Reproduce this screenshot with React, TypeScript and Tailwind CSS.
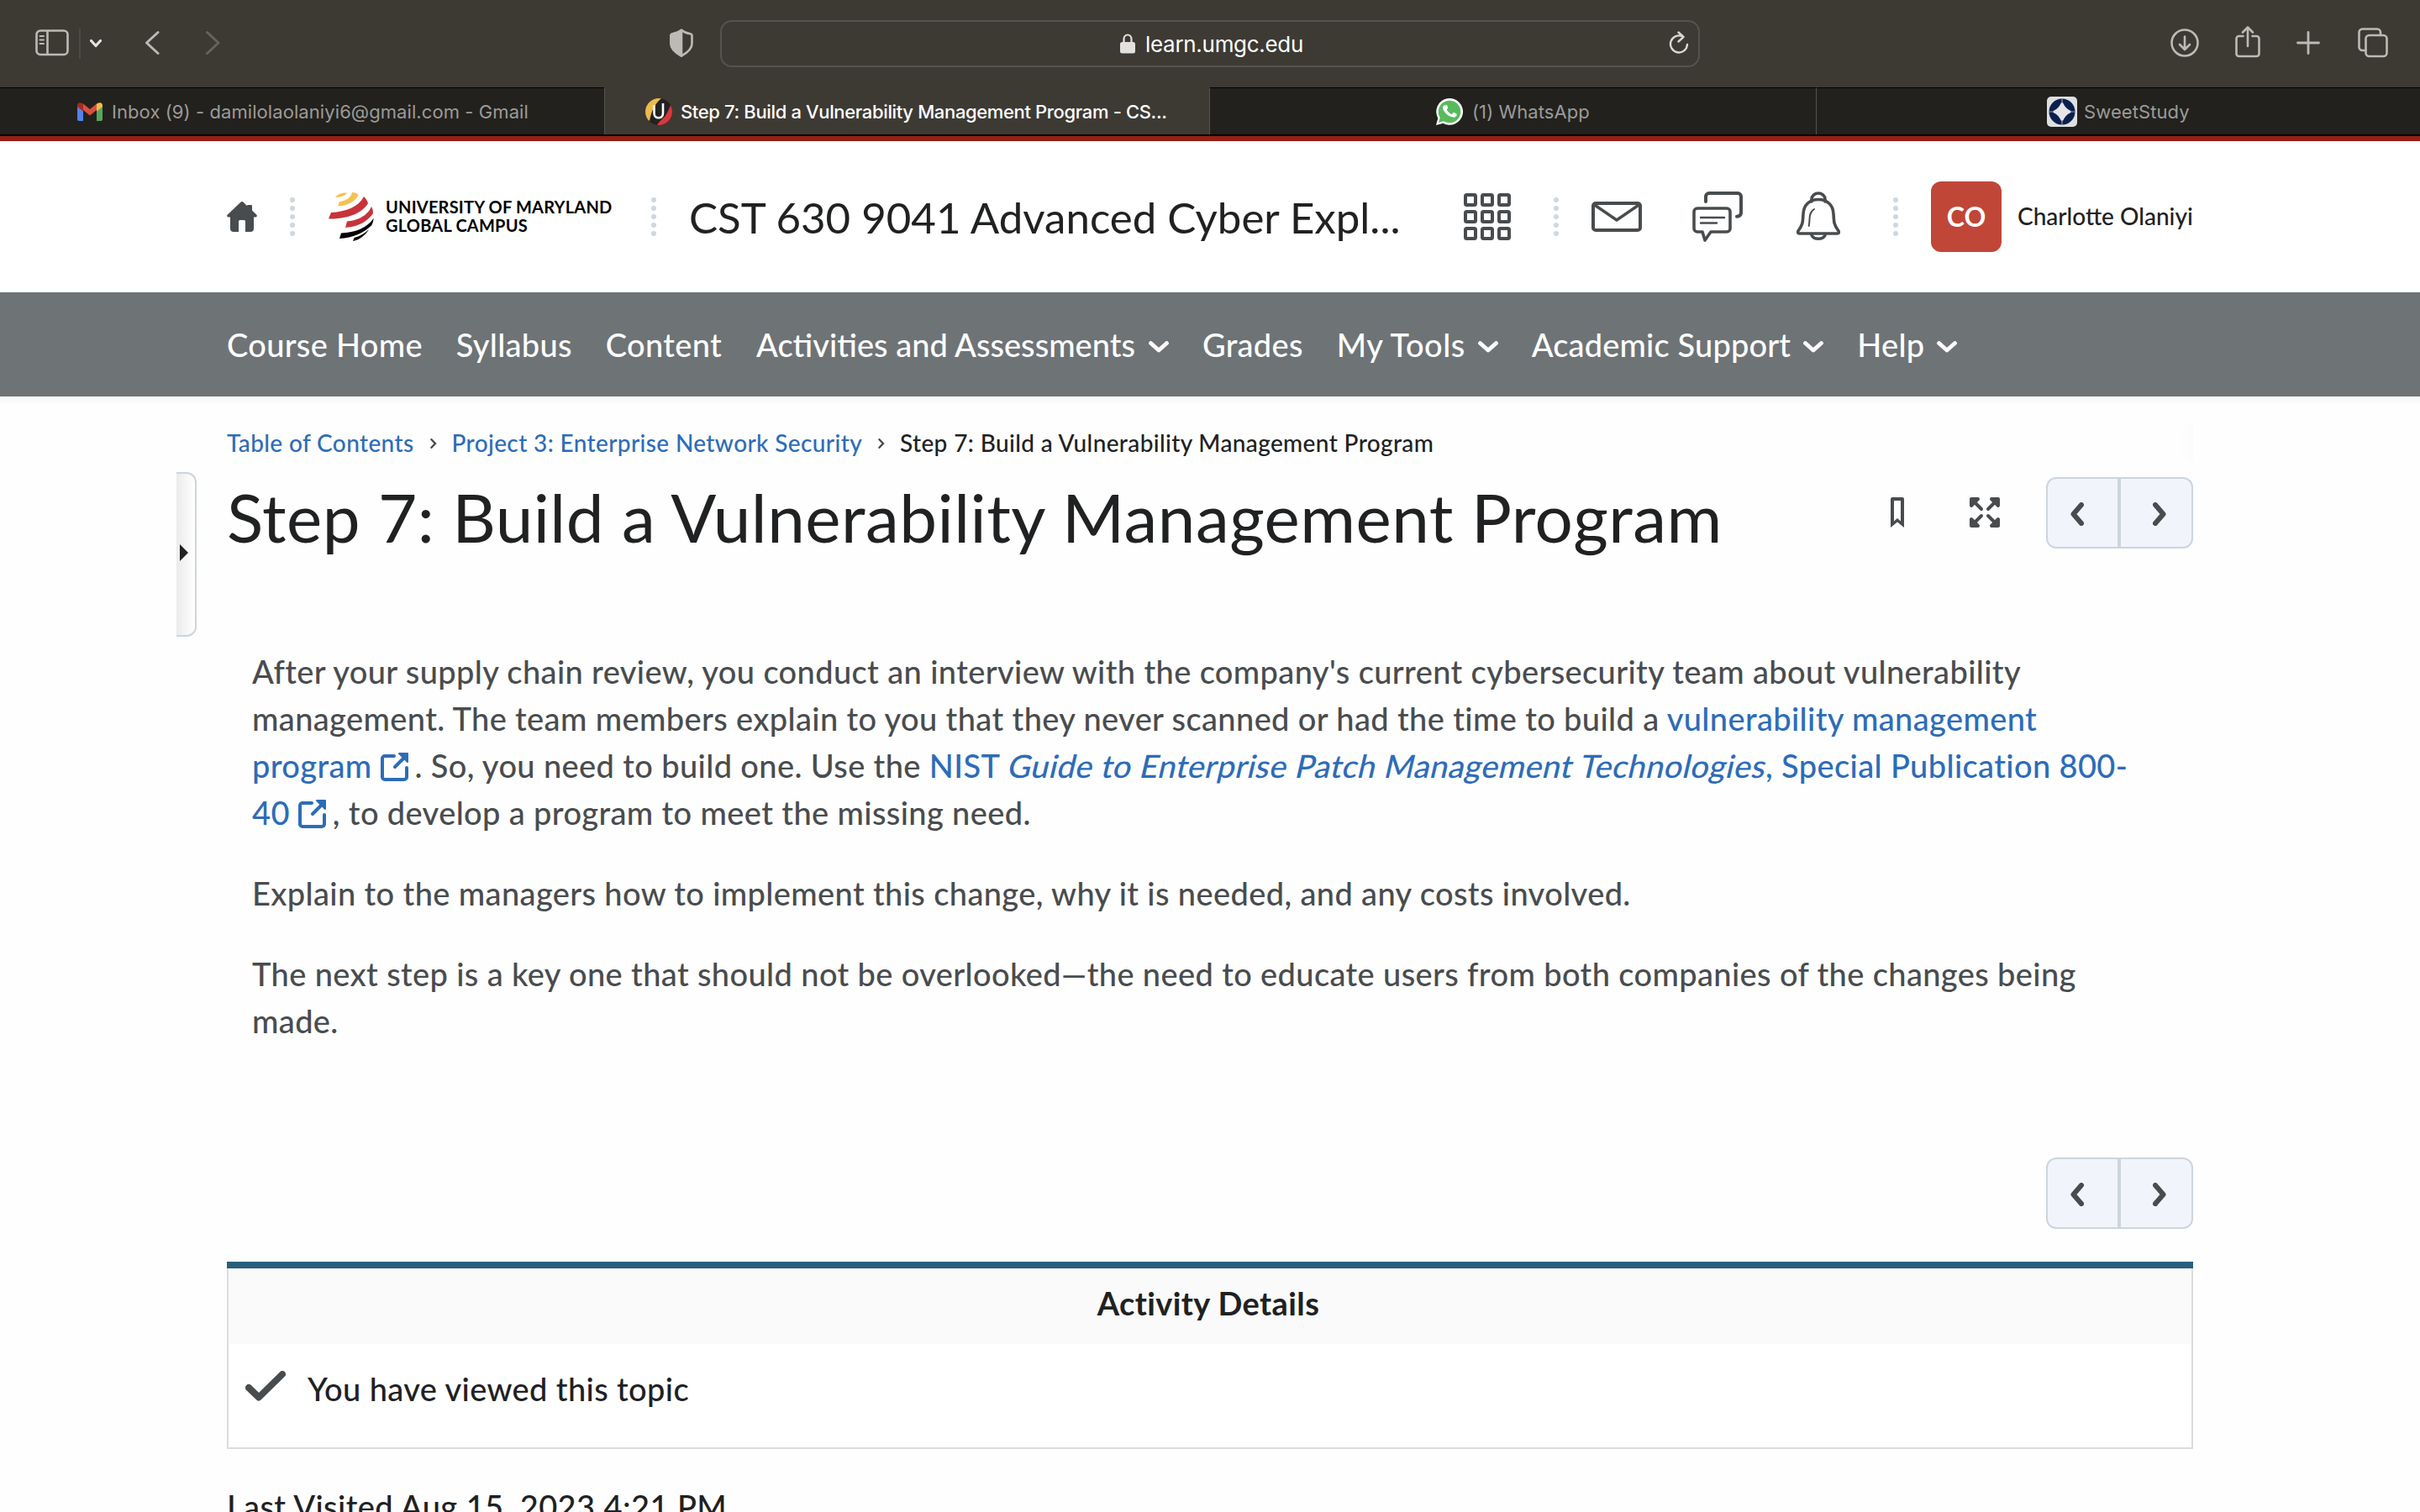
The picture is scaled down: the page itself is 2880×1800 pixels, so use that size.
import React from 'react';

const GmailIcon = () => (
  <svg className="w-[30px] h-[22px] shrink-0" viewBox="0 0 30 22">
    <path d="M0 3v17a2 2 0 0 0 2 2h5V8z" fill="#5383ec" />
    <path d="M30 3v17a2 2 0 0 1-2 2h-5V8z" fill="#58a65c" />
    <path d="M7 9 15 15.500 23 9V1.500L15 8 7 1.500z" fill="#d95040" />
    <path d="M7 1.500 4.500.5C2-.5 0 1 0 3.500V5l7 5.500z" fill="#a52a21" />
    <path d="M23 1.500 25.500.5C28-.5 30 1 30 3.500V5l-7 5.500z" fill="#f2bf42" />
  </svg>
);

const UmgcFavicon = () => (
  <svg className="w-8 h-8 shrink-0" viewBox="0 0 32 32">
    <clipPath id="fav">
      <circle cx="16" cy="16" r="16" />
    </clipPath>
    <g clipPath="url(#fav)">
      <rect width="32" height="32" fill="#222" />
      <path d="M0 0h19C12 6 7 15 5 27L0 24z" fill="#edbb4d" />
      <path d="M32 6c-3 2-5 12-10 17-3 3-6 5-8 9h18z" fill="#d8383d" />
    </g>
    <path d="M10.500 8v10c0 7 10.500 7 10.500 0V6" fill="none" stroke="#fff" strokeWidth="2.600" />
  </svg>
);

const WhatsAppIcon = () => (
  <svg className="w-8 h-8 shrink-0" viewBox="0 0 32 32">
    <path d="M0 32l2.300-8.200A15.900 15.900 0 1 1 8.300 29.800z" fill="#fff" />
    <path d="M3 29l1.700-6A13.300 13.300 0 1 1 9 27.300z" fill="#57bb5b" />
    <path
      d="M11.600 8.600c-.4-.8-.7-.8-1.100-.8-1.200 0-2.800 1.400-2.800 3.700 0 2.400 1.700 4.600 2 5 .2.3 3.300 5.200 8.200 7.100 4 1.600 4.900 1.300 5.800 1.200.9-.1 2.800-1.200 3.200-2.300.4-1.100.4-2.100.3-2.300-.2-.4-4-2.200-4.500-2.200-.8 0-1.700 2.800-2.400 2.800-.9 0-6-3.400-7-6.600 0-.7 1.600-1.900 1.600-2.700 0-.4-1.400-3.900-1.600-4.400z"
      fill="#fff"
      transform="translate(1.500 1.500) scale(.85)"
    />
  </svg>
);

const SweetStudyIcon = () => (
  <svg className="w-9 h-9 shrink-0" viewBox="0 0 36 36">
    <rect width="36" height="36" rx="5" fill="#dedfe1" />
    <circle cx="18" cy="18" r="15.500" fill="#0b1f4f" />
    <path d="M18 8c2 4.500 5 8 9.500 10-4.500 2-7.500 5.500-9.500 10-2-4.500-5-8-9.500-10C13 16 16 12.500 18 8z" fill="#e4e5e8" stroke="#e4e5e8" strokeWidth="2.500" strokeLinejoin="round" />
    <path d="M18 2v6M18 28v6M2 18h6M28 18h6" stroke="#8f97ad" strokeWidth="1.200" />
  </svg>
);

const UmgcLogo = () => (
  <svg className="w-[54px] h-[58px] shrink-0" viewBox="0 0 54 58">
    <path d="M8 5.500C11 2 17 0 22 .5 20 4 14 6.500 8 5.500z" fill="#f5c150" />
    <path d="M28 0c3 0 6 1 7.500 3C33 10 23 16 11 16.500L13 11c8-1 14-5 15-11z" fill="#f5c150" />
    <path d="M42 5c2 2 4 4.500 5 8C40 25 22 32 0 31.500L3 24c18-1 33-7 39-19z" fill="#c8333a" />
    <path d="M51 17c1.500 2 2 5 2 8-6 9-17 16-33 17l2-7.500c14-1 25-8 29-17.500z" fill="#c8333a" />
    <path d="M53.500 31c0 3-1 6-2.500 8.500C42 48 29 54.500 13 55l2-6.500C32 48 46 42 53.500 31z" fill="#000" />
    <path d="M48 44c-4 7-11 12.500-19 14l1.500-4C37 52.500 43 49 48 44z" fill="#000" />
  </svg>
);

const Dots = ({ className = '' }: { className?: string }) => (
  <div className={`flex flex-col gap-1 shrink-0 ${className}`}>
    {[0, 1, 2, 3, 4].map((i) => (
      <span key={i} className="w-1.5 h-1.5 rounded-full bg-[#cfd7de]" />
    ))}
  </div>
);

const Tab = ({ icon, title, active, className }: { icon: React.ReactNode; title: string; active?: boolean; className: string }) => (
  <div
    className={`flex items-center border-t text-[22px] leading-[32px] ${
      active ? 'bg-[#3d3a34] border-[#3d3a34] text-white font-medium tracking-[-0.36px]' : 'bg-[#22211e] border-black text-[#9c9b98] tracking-[0.08px]'
    } ${className}`}
  >
    {icon}
    <span className="whitespace-nowrap">{title}</span>
  </div>
);

const NavItem = ({ label, menu, className = 'tracking-[0.3px]' }: { label: string; menu?: boolean; className?: string }) => (
  <a className="flex items-center">
    <span className={`whitespace-nowrap ${className}`}>{label}</span>
    {menu && (
      <svg className="w-6 h-[14px] ml-[15px] mt-[5px]" viewBox="0 0 24 14" fill="none" stroke="#fff" strokeWidth="4.800" strokeLinecap="round" strokeLinejoin="round">
        <path d="M2.500 2.500 12 11l9.500-8.500" />
      </svg>
    )}
  </a>
);

const Crumb = () => (
  <div className="w-[45px] h-[42px] flex items-center justify-center">
    <svg className="w-2 h-3 mt-[1px] ml-px" viewBox="0 0 8 12" fill="none" stroke="#494c4e" strokeWidth="2.400" strokeLinecap="round">
      <path d="M1.500 1.200 6 6 1.500 10.800" />
    </svg>
  </div>
);

const Pager = () => (
  <div className="flex w-[175px] h-[85px] rounded-xl border-2 border-[#cdd5dc] bg-[#f1f5fb] text-[#494c4e] shrink-0">
    <div className="w-[83px] flex items-center pl-[27px] pt-[2px]">
      <svg className="w-4 h-7" viewBox="0 0 16 28" fill="none" stroke="currentColor" strokeWidth="6" strokeLinecap="round" strokeLinejoin="round">
        <path d="M13 3 3.500 14 13 25" />
      </svg>
    </div>
    <div className="w-1 bg-[#cdd5d9]" />
    <div className="flex-1 flex items-center pl-[38px] pt-[2px]">
      <svg className="w-4 h-7" viewBox="0 0 16 28" fill="none" stroke="currentColor" strokeWidth="6" strokeLinecap="round" strokeLinejoin="round">
        <path d="M3 3 12.500 14 3 25" />
      </svg>
    </div>
  </div>
);

const External = () => (
  <svg className="inline-block align-baseline w-[34px] h-[34px] ml-2.5 mr-[7px] -mb-1" viewBox="0 0 34 34" fill="none" stroke="#2d6cb8" strokeWidth="4">
    <path d="M16 4H5a3 3 0 0 0-3 3v22a3 3 0 0 0 3 3h23a3 3 0 0 0 3-3V18" strokeLinecap="round" />
    <path d="M17 17 28 6" strokeLinecap="round" />
    <path d="M22 1h10v10z" fill="#2d6cb8" strokeWidth="2" strokeLinejoin="round" />
  </svg>
);

const App: React.FC = () => {
  return (
    <div className="w-[2880px] h-[1800px] overflow-hidden bg-[#fefefe] font-['Lato',sans-serif] font-medium text-[#202122]">
      {/* Browser toolbar */}
      <div className="h-[104px] bg-[#3d3a34] font-['Inter',sans-serif] flex items-start text-[#bdbab4]">
        <svg className="w-[40px] h-8 ml-[42px] mt-[35px] shrink-0" viewBox="0 0 40 32" fill="none" stroke="currentColor" strokeWidth="2.600">
          <rect x="1.500" y="1.500" width="37" height="28.500" rx="4.500" />
          <path d="M14.500 2v28" />
          <path d="M5.500 8h4.500M5.500 12.500h4.500M5.500 17h4.500" strokeWidth="2" strokeLinecap="round" />
        </svg>
        <div className="w-0.5 h-9 mt-[34px] ml-[12px] bg-[#4d4a45]" />
        <svg className="w-4 h-3 mt-[46px] ml-[10px] shrink-0" viewBox="0 0 16 12" fill="none" stroke="#e5e4e2" strokeWidth="3.200" strokeLinecap="round" strokeLinejoin="round">
          <path d="m2.500 2.500 5.500 6 5.500-6" />
        </svg>
        <svg className="w-[18px] h-[30px] mt-9 ml-[50px] shrink-0" viewBox="0 0 18 30" fill="none" stroke="currentColor" strokeWidth="3" strokeLinecap="round" strokeLinejoin="round">
          <path d="M16 2.500 2.500 15 16 27.500" />
        </svg>
        <svg className="w-[18px] h-[30px] mt-9 ml-[54px] shrink-0" viewBox="0 0 18 30" fill="none" stroke="#66635d" strokeWidth="3" strokeLinecap="round" strokeLinejoin="round">
          <path d="M2.500 2.500 16 15 2.500 27.500" />
        </svg>
        <svg className="w-7 h-[34px] mt-[34px] ml-[535px] shrink-0" viewBox="0 0 28 34" fill="none" stroke="currentColor" strokeWidth="2.600" strokeLinejoin="round">
          <path d="M14 1.800c3 2.600 7 4 10.500 4.400 1.200.2 2 1 2 2.200V18c0 7-6 11-12.500 14.500C7.500 29 1.500 25 1.500 18V8.400c0-1.200.8-2 2-2.200C7 5.800 11 4.400 14 1.800z" />
          <path d="M14 2v30.500C7.500 29 1.500 25 1.500 18V8.400c0-1.200.8-2 2-2.200C7 5.800 11 4.400 14 2z" fill="currentColor" />
        </svg>
        <div className="w-[1166px] h-14 mt-6 ml-8 shrink-0 rounded-[14px] border-2 border-[#56534e] flex items-center">
          <svg className="w-[18px] h-6 ml-[474px]" viewBox="0 0 18 24">
            <path d="M4.500 11V6.500a4.500 5 0 0 1 9 0V11" fill="none" stroke="#e2e1df" strokeWidth="2.200" />
            <rect y="10" width="18" height="13.500" rx="2.500" fill="#e2e1df" />
          </svg>
          <span className="ml-[12px] mt-px text-[26px] leading-8 font-normal tracking-[-0.3px] text-white">learn.umgc.edu</span>
          <svg className="w-[24px] h-[27px] ml-auto mr-[11px] -mt-1" viewBox="0 0 24 27" fill="none" stroke="#d8d7d4" strokeWidth="2.400" strokeLinecap="round" strokeLinejoin="round">
            <path d="M16.500 6.500A10 10 0 1 0 22 16" />
            <path d="M11.500 1.500 17.500 7l-6 5.500" />
          </svg>
        </div>
        <svg className="w-[34px] h-[34px] mt-[34px] ml-[560px] shrink-0" viewBox="0 0 34 34" fill="none" stroke="currentColor" strokeWidth="2.600" strokeLinecap="round" strokeLinejoin="round">
          <circle cx="17" cy="17" r="15.500" />
          <path d="M17 9.500v15M11 19l6 6 6-6" />
        </svg>
        <svg className="w-[30px] h-[38px] mt-[31px] ml-[43px] shrink-0" viewBox="0 0 30 38" fill="none" stroke="currentColor" strokeWidth="2.600" strokeLinecap="round" strokeLinejoin="round">
          <path d="M9.500 12H4.500a3 3 0 0 0-3 3v18a3 3 0 0 0 3 3h21a3 3 0 0 0 3-3V15a3 3 0 0 0-3-3h-5" />
          <path d="M15 24V2M9 7.500l6-6 6 6" />
        </svg>
        <svg className="w-7 h-7 mt-[37px] ml-[43px] shrink-0" viewBox="0 0 28 28" fill="none" stroke="currentColor" strokeWidth="2.800" strokeLinecap="round">
          <path d="M14 1.500v25M1.500 14h25" />
        </svg>
        <svg className="w-9 h-9 mt-[33px] ml-[45px] shrink-0" viewBox="0 0 36 36" fill="none" stroke="currentColor" strokeWidth="2.600" strokeLinecap="round" strokeLinejoin="round">
          <path d="M9.500 27H5.500a4 4 0 0 1-4-4V5.500a4 4 0 0 1 4-4H23a4 4 0 0 1 4 4V9" />
          <rect x="9.500" y="9" width="25" height="25" rx="4" />
        </svg>
      </div>

      {/* Tab strip */}
      <div className="h-14 flex font-['Inter',sans-serif] font-normal">
        <Tab icon={<GmailIcon />} title="Inbox (9) - damilolaolaniyi6@gmail.com - Gmail" className="w-[719px] pl-[92px] gap-[11px]" />
        <Tab icon={<UmgcFavicon />} active title="Step 7: Build a Vulnerability Management Program - CS..." className="w-[720px] border-l border-l-[#56534e] pl-[48px] gap-[10px]" />
        <Tab icon={<WhatsAppIcon />} title="(1) WhatsApp" className="w-[722px] border-l border-l-[#56534e] pl-[269px] gap-[11px]" />
        <Tab icon={<SweetStudyIcon />} title="SweetStudy" className="w-[719px] border-l border-l-[#56534e] pl-[274px] gap-[8px]" />
      </div>
      <div className="h-0.5 bg-black" />
      <div className="h-1.5 bg-[#941f16]" />

      {/* Course header */}
      <header className="h-[180px] bg-white px-[270px] flex items-center">
        <svg className="w-9 h-9 shrink-0" viewBox="0 0 36 36" fill="#494c4e">
          <path d="M16.600.6a2 2 0 0 1 2.800 0L24 5h0a1 1 0 0 1 1-1h4a1 1 0 0 1 1 1v5.500l5.400 5.200a1.800 1.800 0 0 1-1.200 2.900H32V32a4 4 0 0 1-4 4h-6V23.500a1.500 1.500 0 0 0-1.500-1.500h-5a1.500 1.500 0 0 0-1.500 1.500V36H8a4 4 0 0 1-4-4V18.600H1.800A1.800 1.800 0 0 1 .6 15.700z" />
        </svg>
        <Dots className="ml-[39px]" />
        <div className="ml-[40px] flex items-center shrink-0">
          <UmgcLogo />
          <div className="ml-[14px] -mt-0.5 w-[316px] text-[20px] leading-[22px] font-bold text-black tracking-[0.2px] whitespace-nowrap">
            UNIVERSITY OF MARYLAND
            <br />
            GLOBAL CAMPUS
          </div>
        </div>
        <Dots />
        <h2 className="ml-[39px] mt-0.5 w-[922px] shrink-0 text-[51px] leading-[62px] font-normal whitespace-nowrap">CST 630 9041 Advanced Cyber Expl...</h2>
        <svg className="w-14 h-14 shrink-0" viewBox="0 0 56 56" fill="none" stroke="#494c4e" strokeWidth="4">
          {[2, 22, 42].map((y) => [2, 22, 42].map((x) => <rect key={`${x}-${y}`} x={x} y={y} width="12" height="12" rx="1.500" />))}
        </svg>
        <Dots className="ml-[51px]" />
        <svg className="w-[60px] h-9 ml-[39px] shrink-0" viewBox="0 0 60 36" fill="none" stroke="#494c4e" strokeWidth="4" strokeLinejoin="round">
          <rect x="2" y="2" width="56" height="32" rx="3" />
          <path d="M3 3.500 30 22 57 3.500" strokeWidth="3.500" />
        </svg>
        <svg className="w-[60px] h-[60px] ml-[60px] shrink-0" viewBox="0 0 60 60" fill="none" stroke="#494c4e" strokeWidth="4" strokeLinecap="round" strokeLinejoin="round">
          <path d="M16 12V6a4 4 0 0 1 4-4h34a4 4 0 0 1 4 4v19c0 3-2 4.500-5 4.800" />
          <path d="M6 20h35a4 4 0 0 1 4 4v20a4 4 0 0 1-4 4H22l-7 10-3-10H6a4 4 0 0 1-4-4V24a4 4 0 0 1 4-4z" strokeWidth="3.600" />
          <path d="M10 31h28M10 37.500h19" strokeWidth="2.400" />
        </svg>
        <svg className="w-[52px] h-[60px] ml-[64px] shrink-0" viewBox="0 0 52 60" fill="none" stroke="#494c4e" strokeWidth="3.600" strokeLinecap="round" strokeLinejoin="round">
          <path d="M18 12V9a8 7 0 0 1 16 0v3" />
          <path d="M26 9.500c11 0 17.500 7 18 17 .5 10 .5 13 6 20.500 1 1.500.5 3-1.500 3h-45c-2 0-2.500-1.500-1.500-3 5.500-7.500 5.500-10.500 6-20.500.5-10 7-17 18-17z" />
          <path d="M18 52a8.500 6.500 0 0 0 16 0" />
          <path d="M21 21c-5 3-5.500 8-5.500 12-.1 3-.2 5-.8 8" strokeWidth="2" />
        </svg>
        <Dots className="ml-[63px]" />
        <div className="ml-[39px] w-[84px] h-[84px] shrink-0 rounded-xl bg-[#c04638] text-white font-bold text-[32px] leading-[84px] text-center">CO</div>
        <span className="ml-[19px] -mt-0.5 text-[28px] whitespace-nowrap">Charlotte Olaniyi</span>
      </header>

      {/* Course navigation */}
      <nav className="h-[124px] bg-[#6e7376] px-[270px] flex items-center gap-10 text-[38px] leading-[46px] text-white">
        <NavItem label="Course Home" />
        <NavItem label="Syllabus" />
        <NavItem label="Content" />
        <NavItem label="Activities and Assessments" menu className="ml-px mr-px tracking-normal" />
        <NavItem label="Grades" />
        <NavItem label="My Tools" menu className="tracking-[0.5px]" />
        <NavItem label="Academic Support" menu className="tracking-[0.15px]" />
        <NavItem label="Help" menu />
      </nav>
      <div className="h-2 bg-[#fafafa]" />

      <main className="relative px-[270px]">
        {/* Side panel handle */}
        <div className="absolute left-[210px] top-[82px] w-6 h-[196px] rounded-r-xl border-2 border-l-0 border-[#cdd5dc] bg-gradient-to-r from-[#ebebeb] to-white">
          <svg className="w-2.5 h-5 ml-1 mt-[84px]" viewBox="0 0 10 20">
            <path d="M0 0 10 10 0 20z" fill="#202122" />
          </svg>
        </div>

        <div className="pt-[26px] h-[87px] flex items-start text-[28px] leading-[42px] tracking-[0.37px] whitespace-nowrap">
          <a className="text-[#2d6cb8]">Table of Contents</a>
          <Crumb />
          <a className="text-[#2d6cb8]">Project 3: Enterprise Network Security</a>
          <Crumb />
          <span>Step 7: Build a Vulnerability Management Program</span>
          <div className="ml-auto w-[17px] h-[42px] bg-gradient-to-r from-[#fefefe] to-[#fafcfb]" />
        </div>

        <div className="flex items-start">
          <h1 className="text-[80px] leading-[96px] font-normal tracking-[0.47px] whitespace-nowrap">Step 7: Build a Vulnerability Management Program</h1>
          <div className="ml-auto mt-px flex items-center text-[#494c4e]">
            <svg className="w-4 h-9 mr-[78px] mb-px" viewBox="0 0 16 36" fill="currentColor">
              <path fillRule="evenodd" d="M2 0h12a2 2 0 0 1 2 2v34l-8-6.500L0 36V2a2 2 0 0 1 2-2zm2 4v24.500l4-3.500 4 3.500V4z" />
            </svg>
            <svg className="w-9 h-9 mr-[55px] mb-px" viewBox="0 0 36 36" fill="currentColor" stroke="currentColor" strokeLinecap="round">
              <path d="M5 5l9 9M31 5l-9 9M5 31l9-9M31 31l-9-9" strokeWidth="4" />
              <path d="M2 0h8a2 2 0 0 1 1.400 3.400l-8 8A2 2 0 0 1 0 10V2a2 2 0 0 1 2-2zM34 0h-8a2 2 0 0 0-1.400 3.400l8 8A2 2 0 0 0 36 10V2a2 2 0 0 0-2-2zM2 36h8a2 2 0 0 0 1.400-3.400l-8-8A2 2 0 0 0 0 26v8a2 2 0 0 0 2 2zM34 36h-8a2 2 0 0 1-1.400-3.400l8-8A2 2 0 0 1 36 26v8a2 2 0 0 1-2 2z" stroke="none" />
            </svg>
            <Pager />
          </div>
        </div>

        {/* Topic body */}
        <article className="mt-[108px] px-[30px] h-[569px] text-[38px] leading-[56px] tracking-[0.37px] text-[#494c4e]">
          <p className="mb-10">
            After your supply chain review, you conduct an interview with the company's current cybersecurity team about vulnerability
            <br />
            management. The team members explain to you that they never scanned or had the time to build a{' '}
            <a className="text-[#2d6cb8]">vulnerability management</a>
            <br />
            <a className="text-[#2d6cb8]">program<External /></a>. So, you need to build one. Use the{' '}
            <a className="text-[#2d6cb8]">
              NIST <em className="inline-block ml-0.5 -mr-0.5 not-italic -skew-x-[13deg]">Guide to Enterprise Patch Management Technologies</em>, Special Publication 800-
            </a>
            <br />
            <a className="text-[#2d6cb8]">40<External /></a>, to develop a program to meet the missing need.
          </p>
          <p className="mb-10">Explain to the managers how to implement this change, why it is needed, and any costs involved.</p>
          <p>
            The next step is a key one that should not be overlooked—the need to educate users from both companies of the changes being
            <br />
            made.
          </p>
        </article>
        <div className="flex justify-end mt-[38px] mb-[39px]">
          <Pager />
        </div>

        {/* Activity details */}
        <section className="border-t-8 border-[#295f7c] bg-white">
          <div className="h-[90px] pr-1 border-x-2 border-[#dcdcdc] bg-[#fafafa] text-center text-[38px] leading-[82px] font-bold tracking-[0.4px]">Activity Details</div>
          <div className="h-[125px] border-2 border-t-0 border-[#dcdcdc] flex items-start pl-5 text-[38px] leading-[56px]">
            <svg className="w-12 h-9 mt-8" viewBox="0 0 48 36" fill="none" stroke="#494c4e" strokeWidth="8" strokeLinecap="round" strokeLinejoin="round">
              <path d="M4 20 16 31.500 44 4" />
            </svg>
            <span className="ml-[26px] mt-[25px] tracking-[0.38px]">You have viewed this topic</span>
          </div>
        </section>
        <p className="mt-10 text-[38px] leading-[56px] tracking-[0.42px]">Last Visited Aug 15, 2023 4:21 PM</p>
      </main>
    </div>
  );
};

export default App;
